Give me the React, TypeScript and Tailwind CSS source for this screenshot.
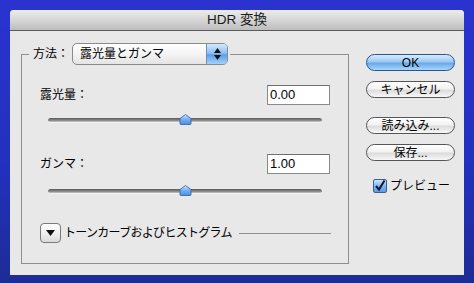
import React from "react";

const FONT = { fontFamily: '"Liberation Sans", "Noto Sans CJK JP", sans-serif' };

function Thumb() {
  return (
    <svg width="13" height="11" viewBox="0 0 13 11" className="absolute top-0" style={{ left: "131px" }}>
      <defs>
        <linearGradient id="tg" x1="0" y1="0" x2="0" y2="1">
          <stop offset="0" stopColor="#cfe6ff" />
          <stop offset="0.5" stopColor="#72b0f2" />
          <stop offset="1" stopColor="#4a8ee0" />
        </linearGradient>
      </defs>
      <path d="M1 4.5 L6.5 0.5 L12 4.5 L12 9.5 Q12 10.5 11 10.5 L2 10.5 Q1 10.5 1 9.5 Z" fill="url(#tg)" stroke="#3a6aa8" strokeWidth="0.9" />
    </svg>
  );
}

function Slider({ className }: { className: string }) {
  return (
    <div className={"relative ml-[26px] w-[274px] h-[11px] " + className}>
      <div className="absolute left-0 right-0 top-[4px] h-[5px] rounded-full bg-[linear-gradient(#5a5a5a,#8a8a8a_60%,#c8c8c8)] border-b border-[#f4f4f4]" />
      <Thumb />
    </div>
  );
}

function Field({ value }: { value: string }) {
  return (
    <div className="w-[63px] h-[20px] bg-white border border-[#8a8a8a] border-t-[#6e6e6e] pl-[2px] text-[13px] leading-[18px] text-black">
      {value}
    </div>
  );
}

function AquaButton({ label, primary, className }: { label: string; primary?: boolean; className?: string }) {
  return (
    <div
      className={
        "w-[89px] h-[17px] rounded-full flex items-center justify-center text-[12px] leading-none text-black border " +
        (primary
          ? "border-[#2a5590] bg-[linear-gradient(#d8ecff,#9cc8f4_45%,#6aa8ea_55%,#a8d6fb)] "
          : "border-[#555] bg-[linear-gradient(#ffffff,#f2f2f2_45%,#dcdcdc_55%,#f8f8f8)] ") +
        (className || "")
      }
    >
      {label}
    </div>
  );
}

export default function App() {
  return (
    <div className="w-[474px] h-[283px] pl-[10px] pt-[10px] bg-[linear-gradient(180deg,#2a33cf,#2231bd_60%,#1d2c95)] overflow-hidden" style={FONT}>
      <div className="w-[454px] h-[265px] bg-[#e8e8e8] rounded-t-[4px] flex flex-col">
        <div className="h-[21px] rounded-t-[4px] bg-[linear-gradient(#ececec,#d6d6d6_50%,#bdbdbd)] border-b border-[#5a5a5a] flex items-center justify-center text-[13.5px] text-[#1a1a1a] shrink-0">
          HDR 変換
        </div>
        <div className="flex">
          <fieldset className="ml-[11px] mt-[12px] w-[328px] h-[221px] border border-[#8e8e8e] flex flex-col">
            <legend className="ml-[7px] px-[4px] pr-[2px] flex items-center">
              <span className="text-[12px] text-black mr-[3px]">方法：</span>
              <div className="w-[156px] h-[22px] rounded-[5px] border border-[#8a8a8a] flex overflow-hidden bg-[linear-gradient(#ffffff,#f4f4f4_50%,#e4e4e4)]">
                <div className="flex-1 pl-[7px] text-[12px] leading-[20px] text-black">露光量とガンマ</div>
                <div className="w-[21px] border-l border-[#7a8fb0] bg-[linear-gradient(#d2e8ff,#8fc1f4_45%,#5c9fe6_55%,#a4d2fb)] flex flex-col items-center justify-center gap-[2px]">
                  <svg width="7" height="5" viewBox="0 0 7 5"><path d="M3.5 0 L7 5 L0 5 Z" fill="#111" /></svg>
                  <svg width="7" height="5" viewBox="0 0 7 5"><path d="M0 0 L7 0 L3.5 5 Z" fill="#111" /></svg>
                </div>
              </div>
            </legend>
            <div className="mt-[20px] pl-[18px] pr-[18px] flex items-center justify-between h-[20px]">
              <span className="text-[12px] text-black">露光量：</span>
              <Field value="0.00" />
            </div>
            <Slider className="mt-[9px]" />
            <div className="mt-[29px] pl-[18px] pr-[18px] flex items-center justify-between h-[20px]">
              <span className="text-[12px] text-black">ガンマ：</span>
              <Field value="1.00" />
            </div>
            <Slider className="mt-[11px]" />
            <div className="mt-[27px] ml-[18px] mr-[17px] flex items-center h-[20px]">
              <div className="w-[21px] h-[20px] rounded-[4px] border border-[#7a7a7a] bg-[linear-gradient(#ffffff,#f0f0f0_50%,#dadada)] flex items-center justify-center">
                <svg width="9" height="6" viewBox="0 0 9 6"><path d="M0 0 L9 0 L4.5 6 Z" fill="#111" /></svg>
              </div>
              <span className="ml-[3px] text-[12px] tracking-[-0.7px] text-black whitespace-nowrap">トーンカーブおよびヒストグラム</span>
              <div className="ml-[7px] flex-1 h-px bg-[#8e8e8e]" />
            </div>
          </fieldset>
          <div className="ml-[17px] mt-[23px] flex flex-col">
            <AquaButton label="OK" primary />
            <AquaButton label="キャンセル" className="mt-[10px]" />
            <AquaButton label="読み込み..." className="mt-[19px]" />
            <AquaButton label="保存..." className="mt-[10px]" />
            <div className="mt-[16px] ml-[7px] flex items-center">
              <div className="w-[14px] h-[14px] rounded-[2px] border border-[#3d5f95] bg-[linear-gradient(#cfe6ff,#7fb6f0_50%,#5a9ce6)] flex items-center justify-center">
                <svg width="12" height="12" viewBox="0 0 12 12"><path d="M2 6 L5 9.5 L10.5 0.5" fill="none" stroke="#0d1a33" strokeWidth="2" /></svg>
              </div>
              <span className="ml-[3px] text-[12px] text-black">プレビュー</span>
            </div>
          </div>
        </div>
      </div>
    </div>
  );
}
